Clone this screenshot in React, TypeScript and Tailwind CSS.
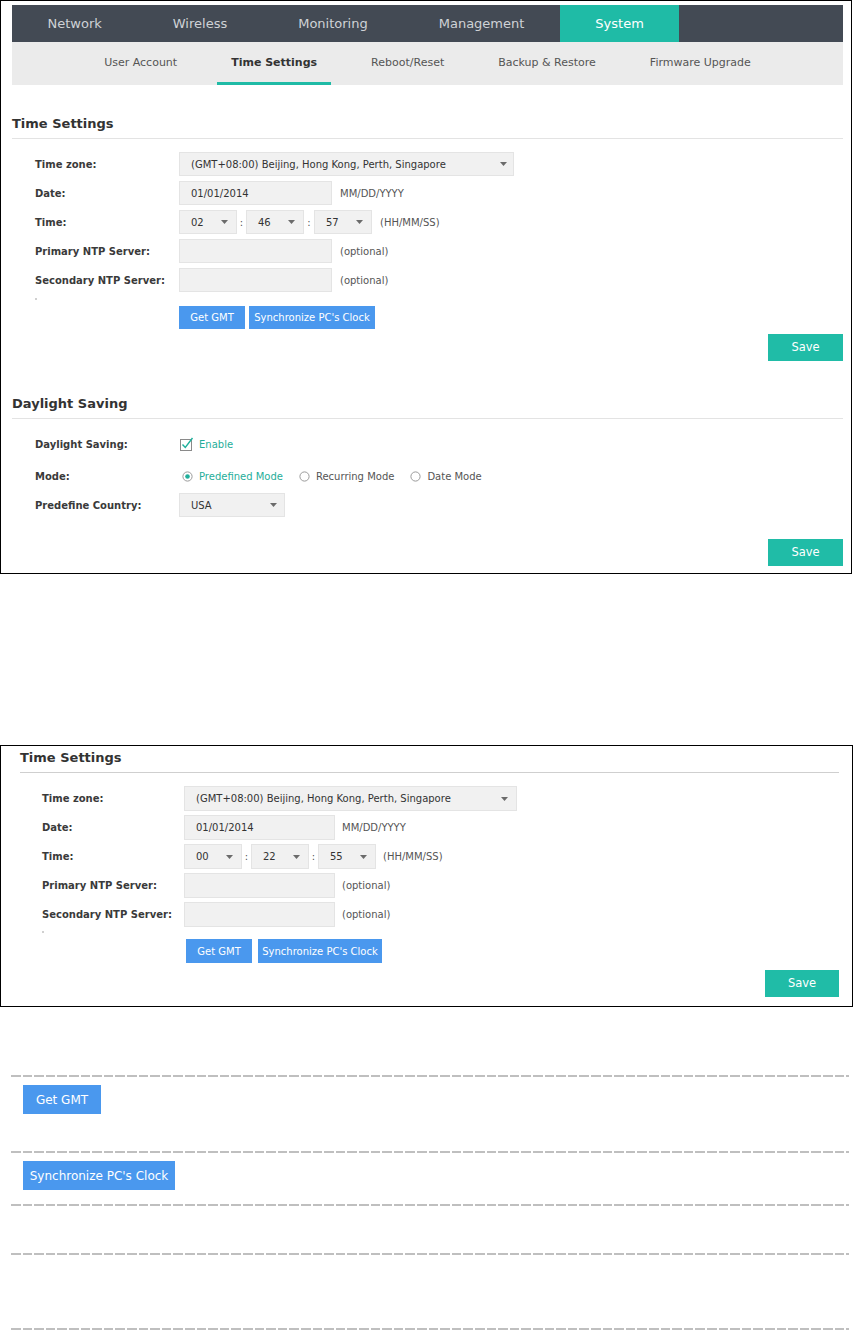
import React from "react";

const Tri = () => (
  <svg width="7" height="4" viewBox="0 0 7 4" className="shrink-0">
    <path d="M0 0H7L3.5 4Z" fill="#6b6b6b" />
  </svg>
);

function Sel({ cls, text }: { cls: string; text: string }) {
  return (
    <div className={"flex h-full items-center justify-between border border-[#e4e4e4] bg-[#f1f1f1] text-[#333] " + cls}>
      <span>{text}</span>
      <Tri />
    </div>
  );
}

function Inp({ cls, text }: { cls: string; text?: string }) {
  return (
    <div className={"flex h-full items-center border border-[#e4e4e4] bg-[#f1f1f1] pl-[11px] text-[#333] " + cls}>
      {text}
    </div>
  );
}

const Dash = () => (
  <div className="h-[2px] w-full bg-[repeating-linear-gradient(90deg,#bfbfbf_0px,#bfbfbf_9.5px,transparent_9.5px,transparent_11.6px)]" />
);

const Radio = ({ on }: { on?: boolean }) => (
  <svg width="11" height="11" viewBox="0 0 11 11" className="shrink-0">
    <circle cx="5.5" cy="5.5" r="4.6" fill="#fff" stroke="#9a9a9a" strokeWidth="1" />
    {on && <circle cx="5.5" cy="5.5" r="2.3" fill="#1fae9a" />}
  </svg>
);

const Check = () => (
  <svg width="14" height="14" viewBox="0 0 14 14" className="shrink-0">
    <rect x="0.5" y="2.5" width="11" height="11" fill="#fff" stroke="#8a8a8a" />
    <path d="M2.5 7.5L5.3 10.5L12.5 1" fill="none" stroke="#1fb09c" strokeWidth="1.4" />
  </svg>
);

export default function App() {
  return (
    <div className="min-h-[1330px] w-[854px] bg-white font-['DejaVu_Sans',sans-serif] text-[#333]">
      {/* Screenshot 1 */}
      <div className="h-[574px] w-[852px] border border-black pl-[11px] pr-[8px] pt-[4px]">
        <nav className="flex h-[37px] bg-[#434a54] text-[13px]">
          {["Network", "Wireless", "Monitoring", "Management"].map((t) => (
            <div key={t} className="flex items-center px-[35.5px] text-[#cfd2d6]">
              {t}
            </div>
          ))}
          <div className="flex items-center bg-[#1fbba6] px-[35.5px] text-white">System</div>
        </nav>
        <div className="flex h-[43px] justify-center gap-[26px] bg-[#ebebeb] text-[11px] text-[#555]">
          <div className="flex items-center px-[14px]">User Account</div>
          <div className="flex items-center border-b-[3px] border-[#1fbba6] px-[14px] pt-[3px] font-bold text-[#333]">
            Time Settings
          </div>
          <div className="flex items-center px-[14px]">Reboot/Reset</div>
          <div className="flex items-center px-[14px]">Backup &amp; Restore</div>
          <div className="flex items-center px-[14px]">Firmware Upgrade</div>
        </div>

        <h2 className="mt-[31px] border-b border-[#e3e3e3] pb-[6px] text-[13px] font-bold leading-[16px] text-[#333]">
          Time Settings
        </h2>
        <div className="mt-[13px] flex flex-col gap-[5px] pl-[23px] text-[10px]">
          <div className="flex h-[24px] items-center">
            <div className="w-[144px] font-bold text-[#3a3a3a]">Time zone:</div>
            <Sel cls="w-[335px] pl-[11px] pr-[6px]" text="(GMT+08:00) Beijing, Hong Kong, Perth, Singapore" />
          </div>
          <div className="flex h-[24px] items-center">
            <div className="w-[144px] font-bold text-[#3a3a3a]">Date:</div>
            <Inp cls="w-[153px]" text="01/01/2014" />
            <span className="ml-[8px] text-[#555]">MM/DD/YYYY</span>
          </div>
          <div className="flex h-[24px] items-center">
            <div className="w-[144px] font-bold text-[#3a3a3a]">Time:</div>
            <Sel cls="w-[58px] pl-[11px] pr-[8px]" text="02" />
            <span className="w-[9px] text-center text-[#555]">:</span>
            <Sel cls="w-[58px] pl-[11px] pr-[8px]" text="46" />
            <span className="w-[10px] text-center text-[#555]">:</span>
            <Sel cls="w-[58px] pl-[11px] pr-[8px]" text="57" />
            <span className="ml-[8px] text-[#555]">(HH/MM/SS)</span>
          </div>
          <div className="flex h-[24px] items-center">
            <div className="w-[144px] font-bold text-[#3a3a3a]">Primary NTP Server:</div>
            <Inp cls="w-[153px]" />
            <span className="ml-[8px] text-[#555]">(optional)</span>
          </div>
          <div className="flex h-[24px] items-center">
            <div className="w-[144px] font-bold text-[#3a3a3a]">Secondary NTP Server:</div>
            <Inp cls="w-[153px]" />
            <span className="ml-[8px] text-[#555]">(optional)</span>
          </div>
        </div>
        <div className="h-[14px] pl-[23px] pt-[6px]">
          <div className="h-[2px] w-[2px] bg-[#d0d0d0]" />
        </div>
        <div className="flex h-[23px] gap-[4px] pl-[167px] text-[10px]">
          <button className="h-full w-[66px] bg-[#4a98ee] text-white">Get GMT</button>
          <button className="h-full w-[126px] bg-[#4a98ee] text-white">Synchronize PC's Clock</button>
        </div>
        <div className="mt-[5px] flex justify-end">
          <button className="h-[27px] w-[75px] bg-[#20bca7] text-[11.5px] text-white">Save</button>
        </div>

        <h2 className="mt-[35px] border-b border-[#e3e3e3] pb-[6px] text-[13px] font-bold leading-[16px] text-[#333]">
          Daylight Saving
        </h2>
        <div className="pl-[23px] text-[10px]">
          <div className="mt-[13px] flex h-[24px] items-center">
            <div className="w-[144px] font-bold text-[#3a3a3a]">Daylight Saving:</div>
            <div className="ml-[1px] flex items-center gap-[5px] text-[#1fae9a]">
              <Check />
              <span>Enable</span>
            </div>
          </div>
          <div className="mt-[8px] flex h-[24px] items-center">
            <div className="w-[144px] font-bold text-[#3a3a3a]">Mode:</div>
            <div className="ml-[3px] flex items-center gap-[16px]">
              <div className="flex items-center gap-[6px] text-[#1fae9a]">
                <Radio on />
                <span>Predefined Mode</span>
              </div>
              <div className="flex items-center gap-[6px] text-[#555]">
                <Radio />
                <span>Recurring Mode</span>
              </div>
              <div className="flex items-center gap-[6px] text-[#555]">
                <Radio />
                <span>Date Mode</span>
              </div>
            </div>
          </div>
          <div className="mt-[5px] flex h-[24px] items-center">
            <div className="w-[144px] font-bold text-[#3a3a3a]">Predefine Country:</div>
            <Sel cls="w-[106px] pl-[11px] pr-[7px]" text="USA" />
          </div>
        </div>
        <div className="mt-[22px] flex justify-end">
          <button className="h-[27px] w-[75px] bg-[#20bca7] text-[11.5px] text-white">Save</button>
        </div>
      </div>

      {/* Screenshot 2 */}
      <div className="mt-[171px] h-[262px] w-[853px] border border-black pl-[19px] pr-[13px] pt-[4px]">
        <h2 className="border-b border-[#cfcfcf] pb-[6px] text-[13px] font-bold leading-[16px] text-[#333]">
          Time Settings
        </h2>
        <div className="mt-[13px] flex flex-col gap-[4px] pl-[22px] text-[10px]">
          <div className="flex h-[25px] items-center">
            <div className="w-[142px] font-bold text-[#3a3a3a]">Time zone:</div>
            <Sel cls="w-[333px] pl-[11px] pr-[8px]" text="(GMT+08:00) Beijing, Hong Kong, Perth, Singapore" />
          </div>
          <div className="flex h-[25px] items-center">
            <div className="w-[142px] font-bold text-[#3a3a3a]">Date:</div>
            <Inp cls="w-[151px]" text="01/01/2014" />
            <span className="ml-[7px] text-[#555]">MM/DD/YYYY</span>
          </div>
          <div className="flex h-[25px] items-center">
            <div className="w-[142px] font-bold text-[#3a3a3a]">Time:</div>
            <Sel cls="w-[58px] pl-[11px] pr-[8px]" text="00" />
            <span className="w-[9px] text-center text-[#555]">:</span>
            <Sel cls="w-[58px] pl-[11px] pr-[8px]" text="22" />
            <span className="w-[9px] text-center text-[#555]">:</span>
            <Sel cls="w-[58px] pl-[11px] pr-[8px]" text="55" />
            <span className="ml-[7px] text-[#555]">(HH/MM/SS)</span>
          </div>
          <div className="flex h-[25px] items-center">
            <div className="w-[142px] font-bold text-[#3a3a3a]">Primary NTP Server:</div>
            <Inp cls="w-[151px]" />
            <span className="ml-[7px] text-[#555]">(optional)</span>
          </div>
          <div className="flex h-[25px] items-center">
            <div className="w-[142px] font-bold text-[#3a3a3a]">Secondary NTP Server:</div>
            <Inp cls="w-[151px]" />
            <span className="ml-[7px] text-[#555]">(optional)</span>
          </div>
        </div>
        <div className="h-[12px] pl-[22px] pt-[4px]">
          <div className="h-[2px] w-[2px] bg-[#d0d0d0]" />
        </div>
        <div className="flex h-[24px] gap-[6px] pl-[166px] text-[10px]">
          <button className="h-full w-[66px] bg-[#4a98ee] text-white">Get GMT</button>
          <button className="h-full w-[124px] bg-[#4a98ee] text-white">Synchronize PC's Clock</button>
        </div>
        <div className="mt-[7px] flex justify-end">
          <button className="h-[27px] w-[74px] bg-[#20bca7] text-[11.5px] text-white">Save</button>
        </div>
      </div>

      {/* Button table */}
      <div className="ml-[11px] mt-[68px] w-[838px]">
        <Dash />
        <button className="ml-[12px] mt-[8px] block h-[29px] w-[78px] bg-[#4a98ee] text-[12px] text-white">Get GMT</button>
        <div className="h-[37px]" />
        <Dash />
        <button className="ml-[12px] mt-[8px] block h-[29px] w-[152px] bg-[#4a98ee] text-[12px] text-white">
          Synchronize PC's Clock
        </button>
        <div className="mt-[14px]">
          <Dash />
        </div>
        <div className="mt-[47px]">
          <Dash />
        </div>
        <div className="mt-[73px]">
          <Dash />
        </div>
      </div>
    </div>
  );
}
